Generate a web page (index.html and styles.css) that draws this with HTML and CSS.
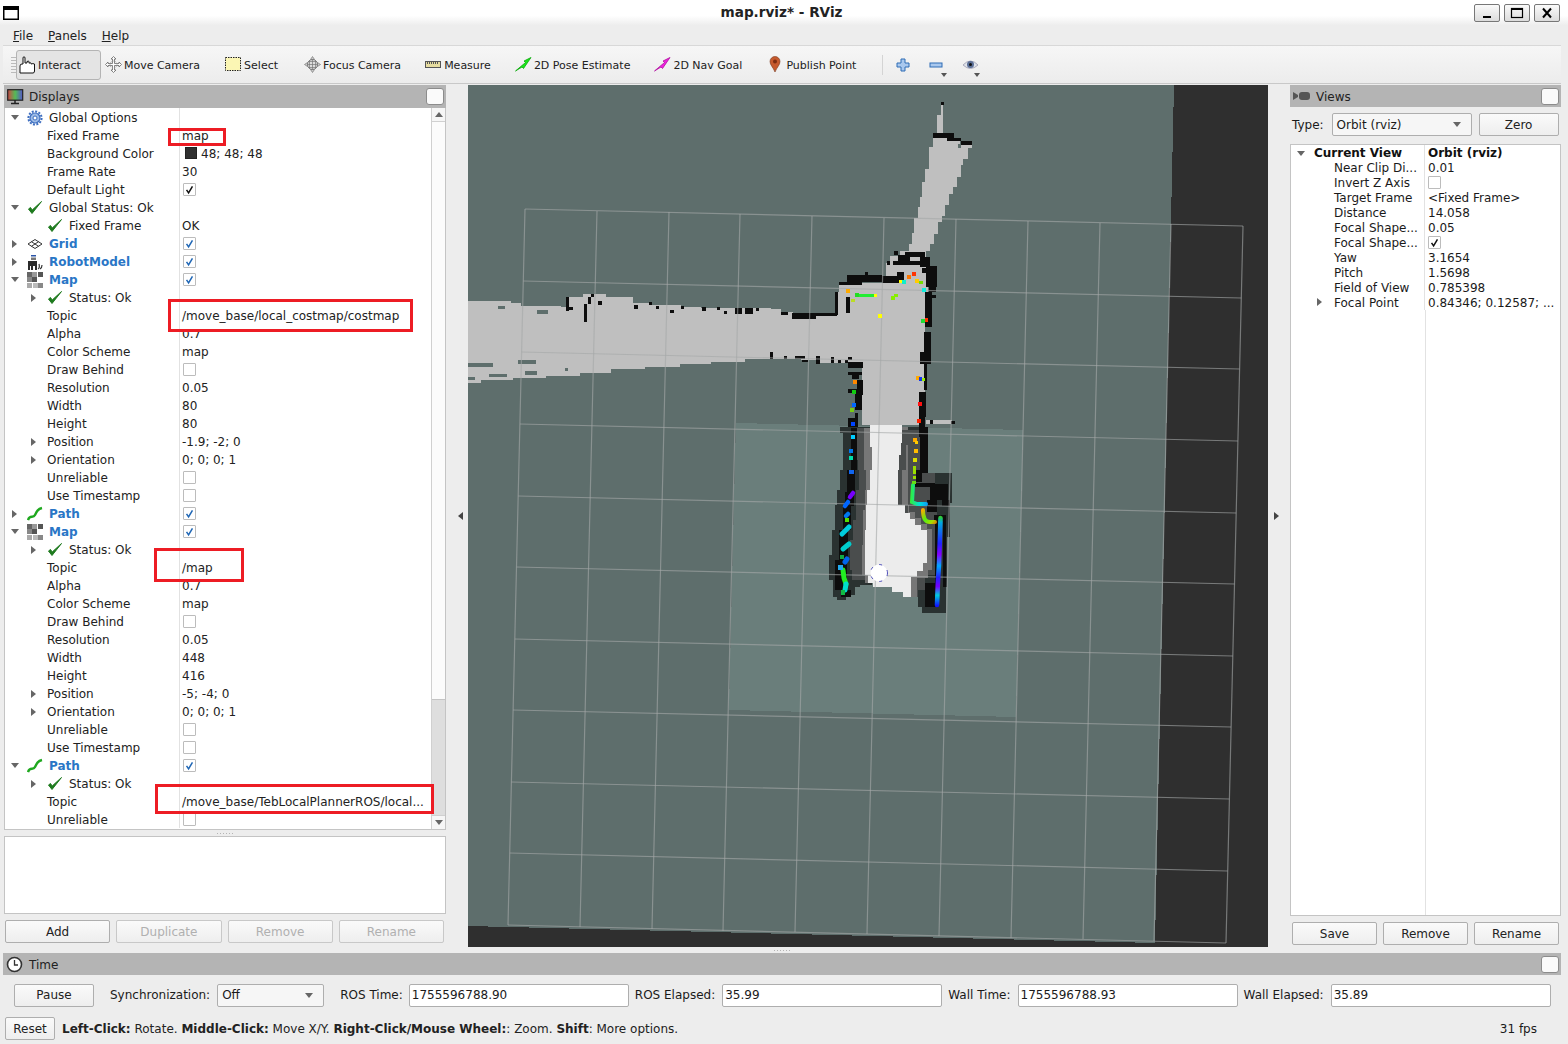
FILE: index.html
```html
<!DOCTYPE html>
<html lang="en">
<head>
<meta charset="utf-8">
<title>map.rviz* - RViz</title>
<link rel="stylesheet" href="styles.css">
</head>
<body>
<svg class="defs" width="0" height="0" aria-hidden="true">
  <defs>
    <symbol id="i-check" viewBox="0 0 16 16"><path d="M1.5 9 L5 13.5 L14.5 1.5 L5.2 10 L3.5 7.5 Z" fill="#1e7a1e" stroke="#1e7a1e" stroke-width="1"/></symbol>
    <symbol id="i-gear" viewBox="0 0 16 16"><circle cx="8" cy="8" r="5" fill="#9dbbe6" stroke="#3f6fc0" stroke-width="1.2"/><circle cx="8" cy="8" r="6.6" fill="none" stroke="#3f6fc0" stroke-width="2" stroke-dasharray="2 1.45"/><circle cx="8" cy="8" r="2" fill="#fff" stroke="#3f6fc0"/></symbol>
    <symbol id="i-grid" viewBox="0 0 16 16"><path d="M1 8 L8 3.5 L15 8 L8 12.5 Z M4.5 5.7 L11.5 10.3 M11.5 5.7 L4.5 10.3" fill="none" stroke="#333" stroke-width="1"/></symbol>
    <symbol id="i-robot" viewBox="0 0 16 16"><path d="M4 1h5v1.5H4z" fill="#2b55a8"/><path d="M4 3.5h5V6H4z" fill="#777"/><path d="M1 7h9v9H8v-4H6v4H4v-4H3v4H1z" fill="#2b2b2b"/><path d="M11 15 Q13 14 12 10 M13 15 Q15 14 15 11" fill="none" stroke="#333" stroke-width="1.2"/></symbol>
    <symbol id="i-map" viewBox="0 0 16 16"><path d="M0 0h5v5H0z" fill="#666"/><path d="M5 0h5v5H5z" fill="#999"/><path d="M0 5h5v5H0z" fill="#888"/><path d="M5 5h5v5H5z" fill="#555"/><path d="M11 0h5v5h-5z" fill="#555"/><path d="M0 11h5v5H0z" fill="#aaa"/><path d="M11 11h5v5h-5z" fill="#888"/><path d="M6 11h5v5H6z" fill="#bbb"/></symbol>
    <symbol id="i-path" viewBox="0 0 16 16"><path d="M1 14 C3 8 6 13 8 9 S11 3 15 2" fill="none" stroke="#1fa81f" stroke-width="2.4"/></symbol>
    <symbol id="i-tick" viewBox="0 0 13 13"><path d="M3 7 L5.4 10.5 L10 2.8" fill="none" stroke="currentColor" stroke-width="1.8"/></symbol>
  </defs>
</svg>

<header class="titlebar">
  <svg class="winicon" width="16" height="14" viewBox="0 0 16 14"><rect x=".75" y=".75" width="14.5" height="12.5" fill="#fff" stroke="#000" stroke-width="1.5"/><rect x="1" y="1" width="14" height="3" fill="#000"/></svg>
  <div class="wintitle">map.rviz* - RViz</div>
  <div class="winbtns">
    <div class="winbtn"><svg width="14" height="12" viewBox="0 0 14 12"><rect x="3" y="9" width="8" height="2" fill="#000"/></svg></div>
    <div class="winbtn"><svg width="14" height="12" viewBox="0 0 14 12"><rect x="1.5" y="1.5" width="11" height="9" fill="none" stroke="#000" stroke-width="1.2"/><rect x="1" y="1" width="12" height="2" fill="#000"/></svg></div>
    <div class="winbtn"><svg width="14" height="12" viewBox="0 0 14 12"><path d="M3 1.5 L11 10.5 M11 1.5 L3 10.5" stroke="#000" stroke-width="2"/></svg></div>
  </div>
</header>

<div class="shell">
<nav class="menubar"><span><u>F</u>ile</span><span><u>P</u>anels</span><span><u>H</u>elp</span></nav>

<div class="toolbar">
  <div class="grip"></div>
  <div class="tool active">
    <svg width="17" height="18" viewBox="0 0 17 18"><path d="M1 17 V10 Q1 8 3 8 H4 V2 Q4 .8 5 .8 T6 2 V7 H8 V5.5 Q9.5 4.8 10 5.5 V7.2 Q11.500 6.200 12 7.200 V8 Q14 7.200 15.500 8 V15 Q15.500 17 14 17 Z" fill="#fff" stroke="#111" stroke-width="1"/></svg>
    <span>Interact</span>
  </div>
  <div class="tool t-move">
    <svg width="17" height="17" viewBox="0 0 17 17"><path d="M8.500 .5 L6 3 H7.500 V7.500 H3 V6 L.5 8.500 L3 11 V9.500 H7.500 V14 H6 L8.500 16.500 L11 14 H9.500 V9.500 H14 V11 L16.500 8.500 L14 6 V7.500 H9.500 V3 H11 Z" fill="#fff" stroke="#666" stroke-width=".8"/><circle cx="8.500" cy="8.500" r="3.500" fill="none" stroke="#999" stroke-dasharray="1 1"/></svg>
    <span>Move Camera</span>
  </div>
  <div class="tool t-select">
    <svg width="17" height="15" viewBox="0 0 17 15"><rect x=".5" y=".5" width="15" height="13" fill="#fbf6b4" stroke="#222" stroke-dasharray="1.500 1"/></svg>
    <span>Select</span>
  </div>
  <div class="tool">
    <svg width="17" height="17" viewBox="0 0 17 17"><path d="M8.500 .5 L6.500 3.500 H10.500 Z M8.500 16.500 L6.500 13.500 H10.500 Z M.5 8.500 L3.500 6.500 V10.500 Z M16.500 8.500 L13.500 6.500 V10.500 Z" fill="#ccc" stroke="#777" stroke-width=".7"/><circle cx="8.500" cy="8.500" r="5" fill="#ddd" stroke="#777"/><path d="M8.500 3.500 V13.500 M3.500 8.500 H13.500 M5.500 5 V12 M11.500 5 V12 M5 5.500 H12 M5 11.500 H12" stroke="#777" stroke-width=".7"/></svg>
    <span>Focus Camera</span>
  </div>
  <div class="tool">
    <svg width="17" height="9" viewBox="0 0 17 9"><rect x=".5" y="1.500" width="15" height="6" fill="#e6dca0" stroke="#555"/><path d="M2.500 2 V4 M4.500 2 V4 M6.500 2 V4 M8.500 2 V4 M10.500 2 V4 M12.500 2 V4" stroke="#555"/></svg>
    <span>Measure</span>
  </div>
  <div class="tool">
    <svg width="17" height="15" viewBox="0 0 17 15"><path d="M16 .5 L9 4 L10.500 5.500 L.5 14 L7 10 L8.500 11.500 Z" fill="#19e619" stroke="#0aa80a" stroke-width=".8"/></svg>
    <span>2D Pose Estimate</span>
  </div>
  <div class="tool t-nav">
    <svg width="17" height="15" viewBox="0 0 17 15"><path d="M16 .5 L9 4 L10.500 5.500 L.5 14 L7 10 L8.500 11.500 Z" fill="#ee22dd" stroke="#b010a0" stroke-width=".8"/></svg>
    <span>2D Nav Goal</span>
  </div>
  <div class="tool pin">
    <svg width="14" height="17" viewBox="0 0 14 17"><path d="M6 16 C4 11 1 9 1 5.500 A5 5 0 0 1 11 5.500 C11 9 8 11 6 16 Z" fill="#c65a2e" stroke="#7a3a20" stroke-width=".6"/><circle cx="6" cy="5.500" r="2" fill="#7c2d12"/></svg>
    <span>Publish Point</span>
  </div>
  <div class="tsep"></div>
  <div class="mini">
    <svg width="14" height="14" viewBox="0 0 14 14"><path d="M5 1 H9 V5 H13 V9 H9 V13 H5 V9 H1 V5 H5 Z" fill="#a9c8ee" stroke="#2f6db5"/></svg>
  </div>
  <div class="mini">
    <svg width="14" height="14" viewBox="0 0 14 14"><rect x="1" y="5" width="12" height="4" fill="#a9c8ee" stroke="#2f6db5"/></svg>
    <i class="drop"></i>
  </div>
  <div class="mini">
    <svg width="17" height="14" viewBox="0 0 17 14"><path d="M1 7 Q8.500 -1 16 7 Q8.500 14 1 7 Z" fill="#dfe3ea" stroke="#aab"/><circle cx="8.500" cy="6.500" r="3.500" fill="#5b6f97"/><circle cx="8.500" cy="6.500" r="1.500" fill="#111"/></svg>
    <i class="drop"></i>
  </div>
</div>

<main class="workspace">
  <section class="displays">
    <div class="dock-head">
      <svg width="17" height="16" viewBox="0 0 17 16"><defs><linearGradient id="mon" x1="0" x2="1"><stop offset="0" stop-color="#c44"/><stop offset=".5" stop-color="#5b5"/><stop offset="1" stop-color="#55c"/></linearGradient></defs><rect x=".7" y=".7" width="15" height="10.500" fill="url(#mon)" stroke="#222" stroke-width="1.200"/><path d="M8 11 V14 M4 14.500 H12" stroke="#222" stroke-width="1.500"/></svg>
      <span>Displays</span>
      <div class="float-btn"></div>
    </div>
    <div class="tree">
      <div class="rows">
        <div class="row"><div class="nm"><i class="tw down"></i><svg class="ico"><use href="#i-gear"/></svg><span>Global Options</span></div><div class="val"></div></div>
        <div class="row"><div class="nm prop">Fixed Frame</div><div class="val">map</div></div>
        <div class="row"><div class="nm prop">Background Color</div><div class="val"><i class="swatch"></i>48; 48; 48</div></div>
        <div class="row"><div class="nm prop">Frame Rate</div><div class="val">30</div></div>
        <div class="row"><div class="nm prop">Default Light</div><div class="val"><i class="cb"><svg><use href="#i-tick"/></svg></i></div></div>
        <div class="row"><div class="nm"><i class="tw down"></i><svg class="ico"><use href="#i-check"/></svg><span>Global Status: Ok</span></div><div class="val"></div></div>
        <div class="row"><div class="nm sub"><i class="tw none"></i><svg class="ico"><use href="#i-check"/></svg><span>Fixed Frame</span></div><div class="val">OK</div></div>
        <div class="row"><div class="nm"><i class="tw"></i><svg class="ico"><use href="#i-grid"/></svg><b>Grid</b></div><div class="val"><i class="cb on"><svg><use href="#i-tick"/></svg></i></div></div>
        <div class="row"><div class="nm"><i class="tw"></i><svg class="ico"><use href="#i-robot"/></svg><b>RobotModel</b></div><div class="val"><i class="cb on"><svg><use href="#i-tick"/></svg></i></div></div>
        <div class="row"><div class="nm"><i class="tw down"></i><svg class="ico"><use href="#i-map"/></svg><b>Map</b></div><div class="val"><i class="cb on"><svg><use href="#i-tick"/></svg></i></div></div>
        <div class="row"><div class="nm sub"><i class="tw"></i><svg class="ico"><use href="#i-check"/></svg><span>Status: Ok</span></div><div class="val"></div></div>
        <div class="row"><div class="nm prop">Topic</div><div class="val">/move_base/local_costmap/costmap</div></div>
        <div class="row"><div class="nm prop">Alpha</div><div class="val">0.7</div></div>
        <div class="row"><div class="nm prop">Color Scheme</div><div class="val">map</div></div>
        <div class="row"><div class="nm prop">Draw Behind</div><div class="val"><i class="cb"></i></div></div>
        <div class="row"><div class="nm prop">Resolution</div><div class="val">0.05</div></div>
        <div class="row"><div class="nm prop">Width</div><div class="val">80</div></div>
        <div class="row"><div class="nm prop">Height</div><div class="val">80</div></div>
        <div class="row"><div class="nm sub"><i class="tw"></i><span class="after-tw">Position</span></div><div class="val">-1.9; -2; 0</div></div>
        <div class="row"><div class="nm sub"><i class="tw"></i><span class="after-tw">Orientation</span></div><div class="val">0; 0; 0; 1</div></div>
        <div class="row"><div class="nm prop">Unreliable</div><div class="val"><i class="cb"></i></div></div>
        <div class="row"><div class="nm prop">Use Timestamp</div><div class="val"><i class="cb"></i></div></div>
        <div class="row"><div class="nm"><i class="tw"></i><svg class="ico"><use href="#i-path"/></svg><b>Path</b></div><div class="val"><i class="cb on"><svg><use href="#i-tick"/></svg></i></div></div>
        <div class="row"><div class="nm"><i class="tw down"></i><svg class="ico"><use href="#i-map"/></svg><b>Map</b></div><div class="val"><i class="cb on"><svg><use href="#i-tick"/></svg></i></div></div>
        <div class="row"><div class="nm sub"><i class="tw"></i><svg class="ico"><use href="#i-check"/></svg><span>Status: Ok</span></div><div class="val"></div></div>
        <div class="row"><div class="nm prop">Topic</div><div class="val">/map</div></div>
        <div class="row"><div class="nm prop">Alpha</div><div class="val">0.7</div></div>
        <div class="row"><div class="nm prop">Color Scheme</div><div class="val">map</div></div>
        <div class="row"><div class="nm prop">Draw Behind</div><div class="val"><i class="cb"></i></div></div>
        <div class="row"><div class="nm prop">Resolution</div><div class="val">0.05</div></div>
        <div class="row"><div class="nm prop">Width</div><div class="val">448</div></div>
        <div class="row"><div class="nm prop">Height</div><div class="val">416</div></div>
        <div class="row"><div class="nm sub"><i class="tw"></i><span class="after-tw">Position</span></div><div class="val">-5; -4; 0</div></div>
        <div class="row"><div class="nm sub"><i class="tw"></i><span class="after-tw">Orientation</span></div><div class="val">0; 0; 0; 1</div></div>
        <div class="row"><div class="nm prop">Unreliable</div><div class="val"><i class="cb"></i></div></div>
        <div class="row"><div class="nm prop">Use Timestamp</div><div class="val"><i class="cb"></i></div></div>
        <div class="row"><div class="nm"><i class="tw down"></i><svg class="ico"><use href="#i-path"/></svg><b>Path</b></div><div class="val"><i class="cb on"><svg><use href="#i-tick"/></svg></i></div></div>
        <div class="row"><div class="nm sub"><i class="tw"></i><svg class="ico"><use href="#i-check"/></svg><span>Status: Ok</span></div><div class="val"></div></div>
        <div class="row"><div class="nm prop">Topic</div><div class="val">/move_base/TebLocalPlannerROS/local...</div></div>
        <div class="row"><div class="nm prop">Unreliable</div><div class="val"><i class="cb"></i></div></div>
      </div>
      <div class="scrollbar">
        <div class="sb-btn"><i class="tri up"></i></div>
        <div class="sb-thumb"></div>
        <div class="sb-track"></div>
        <div class="sb-btn"><i class="tri dn"></i></div>
      </div>
    </div>
    <div class="hsplit"></div>
    <div class="desc"></div>
    <div class="btnrow">
      <button class="btn">Add</button>
      <button class="btn off">Duplicate</button>
      <button class="btn off">Remove</button>
      <button class="btn off">Rename</button>
    </div>
  </section>

  <div class="vsplit"><i class="tri lf"></i></div>

  <div class="canvas">
    <svg width="800" height="862" viewBox="468 85 800 862" shape-rendering="crispEdges">
      <defs>
        <linearGradient id="pr" gradientUnits="userSpaceOnUse" x1="0" y1="517" x2="0" y2="606">
          <stop offset="0" stop-color="#3c3"/><stop offset=".06" stop-color="#0ad"/><stop offset=".3" stop-color="#22f"/><stop offset=".42" stop-color="#80f"/><stop offset=".55" stop-color="#0af"/><stop offset=".68" stop-color="#22f"/><stop offset=".78" stop-color="#70f"/><stop offset=".88" stop-color="#0cd"/><stop offset="1" stop-color="#11f"/>
        </linearGradient>
        <linearGradient id="pl" gradientUnits="userSpaceOnUse" x1="910" y1="0" x2="930" y2="0">
          <stop offset="0" stop-color="#3e3"/><stop offset=".5" stop-color="#0dd"/><stop offset="1" stop-color="#18f"/>
        </linearGradient>
        <linearGradient id="pa" gradientUnits="userSpaceOnUse" x1="922" y1="510" x2="938" y2="525">
          <stop offset="0" stop-color="#fa0"/><stop offset=".4" stop-color="#5e1"/><stop offset=".7" stop-color="#ad0"/><stop offset="1" stop-color="#f40"/>
        </linearGradient>
      </defs>
      <rect x="468" y="85" width="800" height="862" fill="#2f2f2f"/>
      <polygon points="468,85 1174,85 1155,943 468,926" fill="#5e6e6c"/>
      <polygon points="736,423 1023,430 1016,717 729,710" fill="#6a7e7b"/>

      <path fill="#bfbfbf" d="M468 301H511V303H521V306H561V307H566V297H583V294H606V297H633V303H650V305H681V307H701V308H771V309H781V312H793V313H835V292H839V283H886V263H890V256H900V251H909V244H912V233H914V218H918V207H920V197H922V182H925V169H929V147H933V137H937V115H941V105H943V133H954V140H960V145H972V148H968V159H963V165H961V177H957V187H953V194H949V205H945V216H942V222H938V234H934V244H930V251H926V257H920V267H928V292H925V425H862V363H818V360H801V359H745V362H711V364H680V367H645V369H611V373H580V376H546V378H513V380H481V383H468Z"/>
      <path fill="#bfbfbf" d="M926 420h26v4h-26z"/>
      <path fill="#5e6e6c" d="M498 306h7v3h-7zM537 310h11v4h-11zM518 360h18v4h-18zM525 371h12v4h-12zM468 363h25v4h-25zM489 374h18v3h-18zM468 377h7v3h-7zM565 368h3v3h-3zM958 144h3v4h-3z"/>

      <path fill="#2a3231" d="M840 427H872V585H860V587H855V595H851V597H846V600H837V597H833V580H829V555H832V530H835V505H837V490H840V470H843V433H840Z"/>
      <path fill="#2a3231" d="M897 427H928V473H952V503H950V537H947V587H946V613H922V607H918V595H905V500H897Z"/>
      <path fill="#4a4d4d" d="M856 428H872V580H852V570H850V540H853V520H856V490H859V470H858Z"/>
      <path fill="#4a4d4d" d="M897 430H922V473H935V510H937V540H936V575H925V590H918V597H905V505H897Z"/>
      <path fill="#777" d="M864 428H875V583H865V575H862V545H863V510H865V490H866V470H864Z"/>
      <path fill="#777" d="M898 427H908V445H906V470H902V505H909V512H915V518H921V524H927V529H932V570H928V578H917V597H908V430H898Z"/>
      <path fill="#ececec" d="M870 425H902V443H901V455H899V470H898V505H905V513H910V519H915V525H921V530H927V563H923V571H917V577H911V597H903V592H892V587H873V583H868V575H865V530H866V505H867V490H870V470H872V447H870Z"/>

      <path fill="#0d0d0d" d="M933 133h21v5h-21zM947 138h14v3h-14zM961 141h11v4h-11zM941 102h3v3h-3zM847 275h35v7h-35zM839 282h23v3h-23zM865 272h3v3h-3zM882 276h22v7h-22zM897 272h7v4h-7zM894 251h4v4h-4zM905 252h20v5h-20zM898 255h12v9h-12zM887 261h3v4h-3zM893 261h27v4h-27zM920 257h10v10h-10zM922 268h15v5h-15zM926 266h11v21h-11zM929 287h7v5h-7zM925 292h7v35h-7zM932 295h4v3h-4zM924 332h7v20h-7zM920 352h11v12h-11zM924 363h3v27h-3zM919 392h7v25h-7zM919 417h6v20h-6zM930 420h3v4h-3zM951 421h4v3h-4zM835 292h3v23h-3zM846 297h4v16h-4zM848 357h4v3h-4zM848 362h15v6h-15zM848 372h14v3h-14zM852 375h7v4h-7zM857 380h6v15h-6zM848 389h9v4h-9zM855 393h7v17h-7zM855 413h3v14h-3zM848 418h10v9h-10z"/>
      <path fill="#0d0d0d" d="M566 297h3v14h-3zM566 307h7v3h-7zM588 297h3v7h-3zM591 294h3v3h-3zM584 304h3v18h-3zM598 301h4v4h-4zM634 305h4v4h-4zM649 302h3v3h-3zM656 306h3v3h-3zM670 310h4v3h-4zM681 306h3v3h-3zM702 307h4v4h-4zM717 307h3v3h-3zM724 311h3v3h-3zM735 308h7v6h-7zM745 308h8v6h-8zM756 308h3v3h-3zM781 312h7v3h-7zM792 313h24v6h-24zM816 313h21v3h-21zM770 352h3v7h-3zM784 356h3v3h-3zM795 356h10v3h-10zM802 360h6v2h-6zM816 356h4v8h-4zM831 357h3v6h-3zM838 360h3v3h-3zM845 360h3v3h-3z"/>
      <path fill="#0d0d0d" d="M851 428h6v42h-6zM847 470h8v22h-8zM845 492h9v14h-9zM843 506h8v24h-8zM839 530h9v30h-9zM835 560h12v30h-12zM841 590h10v7h-10zM920 427h8v46h-8zM916 470h6v12h-6zM915 483h20v4h-20zM930 484h18v16h-18zM927 500h10v12h-10zM942 500h8v6h-8zM934 515h12v6h-12zM943 520h3v67h-3zM935 518h3v65h-3zM925 583h12v24h-12z"/>

      <g fill="none" stroke="#a4a8a8" stroke-opacity=".62" stroke-width="1.200" shape-rendering="geometricPrecision">
        <path d="M525 209L508 925M597 211L580 927M669 212L652 929M740 214L723 931M812 216L795 932M884 218L867 934M956 219L939 936M1028 221L1011 938M1100 223L1083 939M1171 224L1154 941M1243 226L1226 943"/>
        <path d="M525 209L1243 226M523.300 281L1241.300 298M521.600 352L1239.600 369M519.900 424L1237.900 441M518.200 496L1236.200 513M516.500 567L1234.500 584M514.800 639L1232.800 656M513.100 710L1231.100 727M511.400 782L1229.400 799M509.700 853L1227.700 871M508 925L1226 943"/>
      </g>

      <g shape-rendering="geometricPrecision" stroke-linecap="round" fill="none">
        <polyline points="940.500,518 940,535 939,565 938,580 937,605" stroke="url(#pr)" stroke-width="4.600"/>
        <polyline points="913,485 912,502 917,504 926,504" stroke="url(#pl)" stroke-width="4"/>
        <path d="M923 510 Q923 522 930 522 L935 522" stroke="url(#pa)" stroke-width="4"/>
        <polyline points="853,493 850,497" stroke="#70f" stroke-width="4.500"/>
        <polyline points="848,502 845,506" stroke="#06f" stroke-width="4.500"/>
        <polyline points="848,514 846,516" stroke="#07e" stroke-width="4.500"/>
        <polyline points="849,527 842,534" stroke="#0cd" stroke-width="5"/>
        <polyline points="849,544 843,549" stroke="#0cc" stroke-width="5"/>
        <polyline points="847,559 845,562" stroke="#06e" stroke-width="5"/>
        <polyline points="843,570 844,578 846,584" stroke="#2e2" stroke-width="5"/>
        <polyline points="846,584 845,590" stroke="#0dc" stroke-width="5"/>
      </g>
      <g>
        <rect x="912" y="272" width="4" height="4" fill="#f30"/><rect x="907" y="275" width="4" height="4" fill="#f70"/><rect x="899" y="280" width="3" height="3" fill="#ff0"/><rect x="902" y="280" width="4" height="4" fill="#1ec"/><rect x="915" y="279" width="4" height="4" fill="#fc0"/><rect x="919" y="281" width="4" height="3" fill="#7d0"/><rect x="922" y="288" width="4" height="4" fill="#1ed"/><rect x="846" y="289" width="4" height="4" fill="#fa0"/><rect x="855" y="293" width="4" height="4" fill="#2d2"/><rect x="851" y="299" width="4" height="3" fill="#bd2"/><rect x="859" y="294" width="17" height="3" fill="#2e3"/><rect x="874" y="294" width="3" height="3" fill="#ff0"/><rect x="891" y="296" width="4" height="4" fill="#8e0"/><rect x="894" y="294" width="4" height="3" fill="#8e0"/><rect x="878" y="314" width="4" height="4" fill="#ff0"/><rect x="921" y="319" width="4" height="4" fill="#2d3"/><rect x="925" y="318" width="3" height="4" fill="#f30"/>
        <rect x="916" y="376" width="4" height="4" fill="#fa0"/><rect x="919" y="377" width="3" height="4" fill="#13e"/><rect x="922" y="378" width="3" height="3" fill="#9e0"/><rect x="853" y="380" width="4" height="4" fill="#f80"/><rect x="852" y="390" width="4" height="4" fill="#1c1"/><rect x="918" y="402" width="4" height="4" fill="#f11"/><rect x="852" y="403" width="4" height="4" fill="#06f"/><rect x="850" y="408" width="4" height="4" fill="#7c1"/><rect x="917" y="419" width="4" height="4" fill="#f20"/><rect x="851" y="422" width="4" height="4" fill="#04f"/>
        <rect x="851" y="435" width="4" height="4" fill="#0cf"/><rect x="849" y="449" width="4" height="4" fill="#07e"/><rect x="849" y="456" width="4" height="4" fill="#0da"/><rect x="849" y="470" width="5" height="4" fill="#16e"/>
        <rect x="913" y="438" width="4" height="4" fill="#fa0"/><rect x="915" y="441" width="3" height="3" fill="#fc0"/><rect x="914" y="449" width="4" height="4" fill="#fb0"/><rect x="913" y="458" width="4" height="4" fill="#dd0"/><rect x="913" y="466" width="3" height="8" fill="#9d0"/><rect x="913" y="476" width="3" height="3" fill="#9d0"/><rect x="912" y="481" width="4" height="3" fill="#6d1"/>
        <rect x="845" y="518" width="4" height="4" fill="#5d0"/><rect x="840" y="555" width="4" height="4" fill="#1a4"/><rect x="838" y="565" width="5" height="5" fill="#2ae"/><rect x="841" y="590" width="4" height="5" fill="#1b4"/>
      </g>
      <circle cx="879" cy="573" r="8" fill="#fff" stroke="#fff" shape-rendering="geometricPrecision"/>
      <circle cx="879" cy="573" r="8.500" fill="none" stroke="#22a" stroke-width=".8" stroke-dasharray="3 7" shape-rendering="geometricPrecision"/>
    </svg>
  </div>

  <div class="vsplit right"><i class="tri rt"></i></div>

  <section class="views">
    <div class="dock-head">
      <svg width="17" height="10" viewBox="0 0 17 10"><path d="M0 1 L5 4 V6 L0 9 Z" fill="#555"/><rect x="6" y="1" width="11" height="8" rx="3" fill="#555"/></svg>
      <span>Views</span>
      <div class="float-btn"></div>
    </div>
    <div class="view-type">
      <span>Type:</span>
      <div class="combo wide">Orbit (rviz)<i class="tri dn"></i></div>
      <button class="btn zero">Zero</button>
    </div>
    <div class="vtree">
      <div class="vrow top"><div class="vn"><i class="tw down"></i><b>Current View</b></div><div class="vv"><b>Orbit (rviz)</b></div></div>
      <div class="vrow"><div class="vn">Near Clip Di...</div><div class="vv">0.01</div></div>
      <div class="vrow"><div class="vn">Invert Z Axis</div><div class="vv"><i class="cb"></i></div></div>
      <div class="vrow"><div class="vn">Target Frame</div><div class="vv">&lt;Fixed Frame&gt;</div></div>
      <div class="vrow"><div class="vn">Distance</div><div class="vv">14.058</div></div>
      <div class="vrow"><div class="vn">Focal Shape...</div><div class="vv">0.05</div></div>
      <div class="vrow"><div class="vn">Focal Shape...</div><div class="vv"><i class="cb"><svg><use href="#i-tick"/></svg></i></div></div>
      <div class="vrow"><div class="vn">Yaw</div><div class="vv">3.1654</div></div>
      <div class="vrow"><div class="vn">Pitch</div><div class="vv">1.5698</div></div>
      <div class="vrow"><div class="vn">Field of View</div><div class="vv">0.785398</div></div>
      <div class="vrow"><div class="vn"><i class="tw sub-tw"></i>Focal Point</div><div class="vv">0.84346; 0.12587; ...</div></div>
      <div class="vfill"></div>
    </div>
    <div class="btnrow vbtns">
      <button class="btn">Save</button>
      <button class="btn">Remove</button>
      <button class="btn">Rename</button>
    </div>
  </section>
</main>

<footer class="timepanel">
  <div class="tsplit"></div>
  <div class="dock-head">
    <svg width="17" height="17" viewBox="0 0 17 17"><circle cx="8.500" cy="8.500" r="7" fill="#fff" stroke="#333" stroke-width="1.600"/><path d="M8.500 4 V9 H12" fill="none" stroke="#333" stroke-width="1.300"/></svg>
    <span>Time</span>
    <div class="float-btn"></div>
  </div>
  <div class="timerow">
    <button class="btn pause">Pause</button>
    <span class="sync">Synchronization:</span>
    <div class="combo off">Off<i class="tri dn"></i></div>
    <span class="tl first">ROS Time:</span><div class="field">1755596788.90</div>
    <span class="tl">ROS Elapsed:</span><div class="field">35.99</div>
    <span class="tl">Wall Time:</span><div class="field">1755596788.93</div>
    <span class="tl">Wall Elapsed:</span><div class="field">35.89</div>
  </div>
  <div class="statusrow">
    <button class="btn reset">Reset</button>
    <div class="hint"><b>Left-Click:</b> Rotate. <b>Middle-Click:</b> Move X/Y. <b>Right-Click/Mouse Wheel:</b>: Zoom. <b>Shift</b>: More options.</div>
    <div class="fps">31 fps</div>
  </div>
</footer>
</div>

<div class="mark m1"></div>
<div class="mark m2"></div>
<div class="mark m3"></div>
<div class="mark m4"></div>
</body>
</html>
```
FILE: styles.css
```css
* { box-sizing: border-box; }
html, body { margin: 0; height: 100%; }
body {
  width: 1568px; height: 1044px; overflow: hidden; position: relative;
  font-family: "DejaVu Sans", sans-serif; font-size: 12px; color: #1a1a1a;
  background: #ededed; display: flex; flex-direction: column;
}
.defs { position: absolute; }
i { font-style: normal; display: inline-block; }

.titlebar {
  height: 26px; flex: none; display: flex; align-items: center; position: relative;
  background: linear-gradient(#ffffff 60%, #ececec); padding: 0 8px 0 3px;
}
.winicon { margin-top: -1px; }
.wintitle { position: absolute; left: 0; right: 5px; top: 4px; text-align: center; font-weight: 700; font-size: 13.6px; color: #222; }
.winbtns { margin-left: auto; display: flex; gap: 4px; }
.winbtn { width: 26px; height: 18px; border: 1px solid #777; border-radius: 2px; background: linear-gradient(#fafafa, #dcdcdc); display: flex; align-items: center; justify-content: center; }

.shell { flex: 1; min-height: 0; display: flex; flex-direction: column; padding: 0 7px 0 3px; }

.menubar { height: 20px; flex: none; display: flex; gap: 15px; padding: 2px 0 0 10px; border-bottom: 1px solid #d8d8d8; color: #222; }
.menubar span { line-height: 16px; }

.toolbar { height: 38px; flex: none; display: flex; align-items: center; padding-left: 8px; background: linear-gradient(#f6f6f6, #ececec); border-bottom: 1px solid #c8c8c8; margin-bottom: 1px; }
.grip { width: 5px; height: 17px; background: radial-gradient(#bbb 40%, transparent 45%) 0 0 / 2px 3px; }
.tool { height: 30px; display: flex; align-items: center; padding: 0 21px 0 3px; gap: 2px; font-size: 11px; color: #222; white-space: nowrap; }
.tool svg { flex: none; }
.tool span { padding-top: 2px; }
.tool.active { margin-right: 1px; padding-right: 19px; background: #e4e4e4; border: 1px solid #b4b4b4; border-radius: 3px; padding-left: 2px; }
.tool.t-move { padding-right: 22px; }
.tool.t-select { padding-right: 23px; }
.tool.t-nav { padding-right: 24px; }
.tool.pin { gap: 3px; padding-right: 26px; }
.tsep { width: 1px; height: 20px; background: #d4d4d4; margin-right: 13px; }
.mini { width: 33px; height: 24px; display: flex; align-items: center; position: relative; }
.drop { position: absolute; right: 15px; bottom: 0; border: 3px solid transparent; border-top: 4px solid #555; border-bottom: 0; }

.workspace { height: 862px; flex: none; display: flex; }
.dock-head { height: 23px; flex: none; background: #b4b4b4; display: flex; align-items: center; gap: 5px; padding-left: 3px; position: relative; color: #222; }
.float-btn { position: absolute; right: 2px; top: 3px; width: 18px; height: 17px; background: #fafafa; border: 1px solid #8c8c8c; border-radius: 3px; }

.displays { width: 443px; flex: none; display: flex; flex-direction: column; }
.displays .dock-head { margin-left: 1px; }
.tree { flex: 1; min-height: 0; margin-left: 1px; display: flex; background: #fff; border: 1px solid #c4c4c4; border-top: 0; overflow: hidden; }
.rows { flex: 1; min-width: 0; overflow: hidden; }
.row { height: 18px; display: grid; grid-template-columns: 175px 1fr; color: #222; }
.nm { display: flex; align-items: center; white-space: nowrap; border-right: 1px solid #e2e2e2; overflow: hidden; height: 18px; padding-top: 2px; }
.nm b { color: #2a76c6; font-weight: 700; }
.nm.prop { padding-left: 42px; }
.nm.sub { padding-left: 19px; }
.nm.sub .ico { margin-left: 3px; }
.val { padding: 2px 0 0 2px; white-space: nowrap; display: flex; align-items: center; height: 18px; }
.val .cb { margin-top: -2px; }
.val .swatch { margin-top: -3px; }
.tw { width: 20px; height: 16px; flex: none; position: relative; }
.tw::after { content: ""; position: absolute; left: 7px; top: 4px; border: 4px solid transparent; border-left: 5px solid #666; border-right: 0; }
.tw.down::after { left: 6px; top: 5px; border: 4px solid transparent; border-top: 5px solid #666; border-bottom: 0; }
.tw.none::after { display: none; }
.after-tw { margin-left: 3px; }
.ico { width: 16px; height: 16px; flex: none; margin: 0 6px 0 2px; }
.swatch { width: 12px; height: 12px; background: #303030; border: 1px solid #222; margin: 0 4px 0 3px; }
.cb { width: 13px; height: 13px; border: 1px solid #bcbcbc; background: #fff; border-radius: 1px; margin-left: 1px; color: #111; flex: none; display: block; }
.cb.on { color: #1f66b5; }
.cb svg { width: 11px; height: 11px; display: block; }

.scrollbar { width: 14px; flex: none; border-left: 1px solid #d0d0d0; display: flex; flex-direction: column; background: #f4f4f4; }
.sb-btn { height: 14px; flex: none; position: relative; background: #f6f6f6; border-bottom: 1px solid #d0d0d0; display: flex; align-items: center; justify-content: center; }
.sb-btn:last-child { border-top: 1px solid #d0d0d0; border-bottom: 0; }
.sb-thumb { height: 578px; flex: none; background: #fbfbfb; border-bottom: 1px solid #c4c4c4; }
.sb-track { flex: 1; background: #dedede; }
.tri { width: 0; height: 0; border: 4px solid transparent; flex: none; }
.tri.up { border-bottom: 5px solid #666; border-top: 0; }
.tri.dn { border-top: 5px solid #666; border-bottom: 0; }
.tri.lf { border-right: 5px solid #444; border-left: 0; }
.tri.rt { border-left: 5px solid #444; border-right: 0; }

.hsplit { height: 6px; flex: none; background: repeating-linear-gradient(90deg, #b4b4b4 0 1px, transparent 1px 3px) center / 16px 1px no-repeat; }
.desc { height: 78px; flex: none; margin-left: 1px; background: #fff; border: 1px solid #c4c4c4; }
.btnrow { height: 23px; flex: none; margin: 6px 0 4px; display: flex; gap: 6px; padding-left: 2px; }
.btn { font: inherit; color: #222; height: 23px; padding: 0; background: linear-gradient(#fafafa, #eeeeee); border: 1px solid #aeaeae; border-radius: 2px; }
.displays .btnrow { padding-right: 2px; }
.displays .btn { flex: 1; }
.btn.off { color: #b0b0b0; border-color: #c8c8c8; }

.vsplit { width: 22px; flex: none; display: flex; align-items: center; padding: 0 0 0 12px; }
.vsplit.right { padding-left: 6px; }
.canvas { width: 800px; flex: none; }
.canvas svg { display: block; }

.views { flex: 1; min-width: 0; display: flex; flex-direction: column; }
.views .dock-head { height: 22px; gap: 6px; }
.views .dock-head span, .timepanel .dock-head span { padding-top: 2px; }
.view-type { height: 23px; flex: none; margin: 6px 0 8px; display: flex; align-items: center; padding-left: 2px; }
.combo { height: 23px; border: 1px solid #aeaeae; border-radius: 2px; background: #f6f6f6; display: flex; align-items: center; justify-content: space-between; padding: 0 10px 0 4px; }
.combo.wide { width: 140px; margin: 0 7px 0 8px; }
.btn.zero { width: 80px; }
.vtree { flex: 1; min-height: 0; background: #fff; border: 1px solid #c4c4c4; position: relative; display: flex; flex-direction: column; }
.vrow { height: 15px; display: grid; grid-template-columns: 134px 1fr; line-height: 15px; flex: none; }
.vrow b { color: #111; }
.vn { padding: 1px 0 0 43px; border-right: 1px solid #e2e2e2; position: relative; white-space: nowrap; overflow: hidden; height: 15px; }
.vv { padding: 1px 0 0 3px; white-space: nowrap; display: flex; align-items: center; height: 15px; }
.vv .cb { margin: -1px 0 0 0; }
.vrow.top .vn { padding-left: 0; display: flex; }
.vrow.top .vn b { margin-left: 3px; }
.vrow.top .tw { height: 15px; }
.sub-tw { position: absolute; left: 19px; top: -1px; }
.vfill { flex: 1; width: 135px; border-right: 1px solid #e2e2e2; }
.vbtns { margin: 6px 0 2px; }
.vbtns .btn { width: 85px; }

.timepanel { flex: 1; min-height: 0; display: flex; flex-direction: column; }
.tsplit { height: 6px; flex: none; background: repeating-linear-gradient(90deg, #b4b4b4 0 1px, transparent 1px 3px) center / 16px 1px no-repeat; }
.timepanel .dock-head { height: 22px; gap: 6px; }
.timerow { height: 24px; flex: none; margin-top: 8px; display: flex; align-items: center; padding-left: 11px; white-space: nowrap; }
.btn.pause { width: 80px; }
.sync { margin-left: 16px; }
.combo.off { width: 107px; margin-left: 7px; }
.tl { margin: 0 7px 0 6px; }
.tl.first { margin: 0 6px 0 16px; }
.field { width: 220px; height: 23px; background: #fff; border: 1px solid #aeaeae; border-radius: 2px; padding-left: 2px; line-height: 21px; }
.statusrow { height: 23px; flex: none; margin-top: 10px; display: flex; align-items: center; padding-left: 2px; white-space: nowrap; }
.btn.reset { width: 50px; }
.hint { margin-left: 7px; color: #222; }
.fps { margin-left: auto; margin-right: 24px; }

.mark { position: absolute; border: 3px solid #ed1c24; }
.m1 { left: 168px; top: 128px; width: 58px; height: 18px; }
.m2 { left: 168px; top: 299px; width: 245px; height: 33px; }
.m3 { left: 154px; top: 548px; width: 90px; height: 34px; }
.m4 { left: 155px; top: 784px; width: 279px; height: 30px; }
```
